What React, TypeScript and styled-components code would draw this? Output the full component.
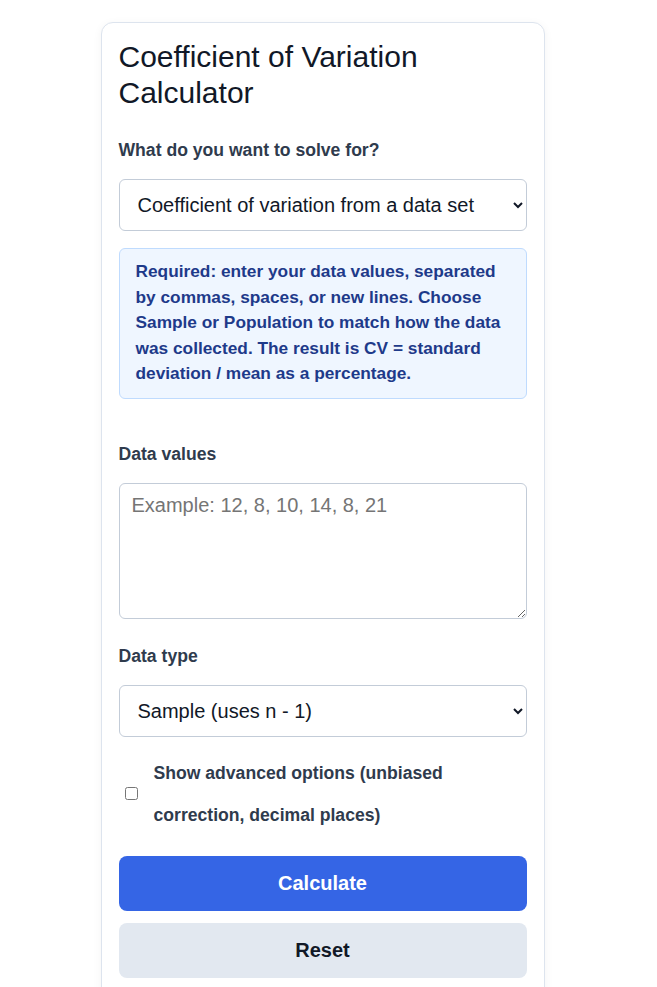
import { createGlobalStyle, styled } from "styled-components";

const GlobalStyle = createGlobalStyle`
  body {
    margin: 0;
    background: #ffffff;
    font-family: "Liberation Sans", Arial, sans-serif;
  }
`;

export default function App() {
  return (
    <>
      <GlobalStyle />
      <Page>
        <Card>
          <Title>Coefficient of Variation Calculator</Title>

          <Label htmlFor="solve">What do you want to solve for?</Label>
          <Select id="solve" defaultValue="dataset">
            <option value="dataset">Coefficient of variation from a data set</option>
            <option value="stats">Coefficient of variation from mean and SD</option>
          </Select>

          <Notice>
            Required: enter your data values, separated by commas, spaces, or new
            lines. Choose Sample or Population to match how the data was
            collected. The result is CV = standard deviation / mean as a
            percentage.
          </Notice>

          <Label htmlFor="values" $spaced>Data values</Label>
          <TextArea id="values" placeholder="Example: 12, 8, 10, 14, 8, 21" />

          <Label htmlFor="type">Data type</Label>
          <Select id="type" defaultValue="sample">
            <option value="sample">Sample (uses n - 1)</option>
            <option value="population">Population (uses n)</option>
          </Select>

          <CheckRow>
            <Check type="checkbox" id="advanced" />
            <CheckLabel htmlFor="advanced">
              Show advanced options (unbiased correction, decimal places)
            </CheckLabel>
          </CheckRow>

          <Actions>
            <Button $primary>Calculate</Button>
            <Button>Reset</Button>
          </Actions>
        </Card>
      </Page>
    </>
  );
}

const Page = styled.div`
  display: flex;
  justify-content: center;
  padding: 22px 12px 0 0;
`;

const Card = styled.div`
  width: 444px;
  box-sizing: border-box;
  display: flex;
  flex-direction: column;
  padding: 16px 17px 24px;
  background: #fff;
  border: 1px solid #dde4ee;
  border-radius: 12px;
  box-shadow: 0 2px 10px rgba(15, 23, 42, 0.05);
`;

const Title = styled.h1`
  margin: 0 0 29px;
  font-size: 30px;
  line-height: 36px;
  font-weight: 400;
  color: #111827;
`;

const Label = styled.label<{ $spaced?: boolean }>`
  display: block;
  margin: ${(p) => (p.$spaced ? "45px" : "0")} 0 18px;
  font-size: 17.6px;
  font-weight: 700;
  line-height: 21px;
  color: #2f3b4d;
`;

const Select = styled.select`
  width: 100%;
  height: 52px;
  box-sizing: border-box;
  padding: 0 12px 0 14px;
  font-family: inherit;
  font-size: 20px;
  color: #111827;
  background: #fff;
  border: 1px solid #c3ccd8;
  border-radius: 6px;
  margin-bottom: 17px;
`;

const Notice = styled.div`
  padding: 10px 16px 11px;
  font-size: 17.3px;
  font-weight: 700;
  line-height: 25.5px;
  color: #1e3a8a;
  background: #eff6ff;
  border: 1px solid #bfdbfe;
  border-radius: 6px;
`;

const TextArea = styled.textarea`
  width: 100%;
  height: 136px;
  box-sizing: border-box;
  padding: 10px 12px;
  font-family: inherit;
  font-size: 20px;
  color: #111827;
  border: 1px solid #c3ccd8;
  border-radius: 6px;
  margin: 0 0 27px;
  resize: vertical;

  &::placeholder {
    color: #757575;
  }
`;

const CheckRow = styled.div`
  display: flex;
  align-items: center;
  gap: 16px;
  margin-top: -2px;
`;

const Check = styled.input`
  width: 13px;
  height: 13px;
  margin: 0 0 0 6px;
  flex-shrink: 0;
`;

const CheckLabel = styled.label`
  font-size: 17.6px;
  font-weight: 700;
  line-height: 42px;
  color: #2f3b4d;
  max-width: 320px;
`;

const Actions = styled.div`
  display: flex;
  flex-direction: column;
  gap: 12px;
  margin-top: 20px;
`;

const Button = styled.button<{ $primary?: boolean }>`
  height: 55px;
  width: 100%;
  font-family: inherit;
  font-size: 20px;
  font-weight: 700;
  border: none;
  border-radius: 8px;
  color: ${(p) => (p.$primary ? "#ffffff" : "#111827")};
  background: ${(p) => (p.$primary ? "#3565e5" : "#e2e8f0")};
  cursor: pointer;
`;
